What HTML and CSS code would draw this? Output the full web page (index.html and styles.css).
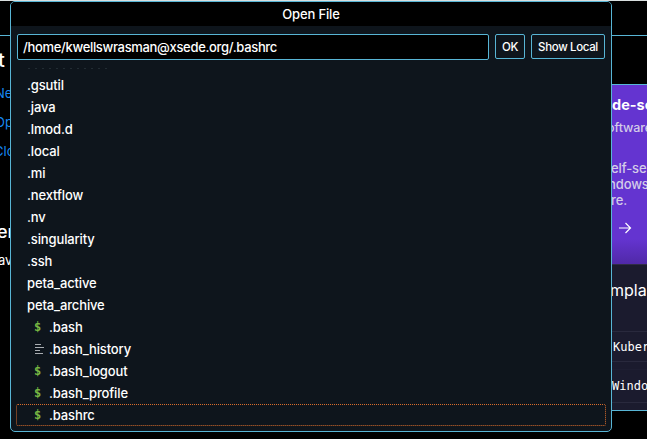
FILE: index.html
```html
<!DOCTYPE html>
<html lang="en">
<head>
<meta charset="utf-8">
<title>Open File</title>
<link rel="stylesheet" href="styles.css">
</head>
<body>
<div class="page">
  <div class="topbar"></div>
  <main class="welcome">
    <section class="start">
      <h1>t</h1>
      <a>Ne</a>
      <a>Op</a>
      <a>Clo</a>
      <h2>er</h2>
      <p>av</p>
    </section>
    <section class="promo">
      <div class="hero">
        <h3>de-se</h3>
        <p class="sub">oftware</p>
        <p class="copy"><span>elf-se</span><br><span class="shift">ndows</span><br><span>re.</span></p>
        <svg class="arrow" width="14" height="12" viewBox="0 0 14 12"><path d="M1 6h11.5M7.5 1l5 5-5 5"/></svg>
      </div>
      <div class="templates">
        <h4>mpla</h4>
        <div class="template">Kuber</div>
        <div class="template second">Windo</div>
      </div>
    </section>
  </main>
</div>
<div class="dialog">
  <header>Open File</header>
  <div class="controls">
    <div class="path"><span>/home/kwellswrasman@xsede.org/.bashrc</span></div>
    <button class="ok">OK</button>
    <button class="local">Show Local</button>
  </div>
  <div class="clipped-row"></div>
  <ul class="files">
    <li><span>.gsutil</span></li>
    <li><span>.java</span></li>
    <li><span>.lmod.d</span></li>
    <li><span>.local</span></li>
    <li><span>.mi</span></li>
    <li><span>.nextflow</span></li>
    <li><span>.nv</span></li>
    <li><span>.singularity</span></li>
    <li><span>.ssh</span></li>
    <li><span>peta_active</span></li>
    <li><span>peta_archive</span></li>
    <li class="file"><i>$</i><span>.bash</span></li>
    <li class="file"><svg width="10" height="10" viewBox="0 0 10 10"><path d="M1 .5h6M1 3.500h9M1 6.500h5M1 9.500h8"/></svg><span>.bash_history</span></li>
    <li class="file"><i>$</i><span>.bash_logout</span></li>
    <li class="file"><i>$</i><span>.bash_profile</span></li>
    <li class="file focused"><i>$</i><span>.bashrc</span></li>
  </ul>
</div>
</body>
</html>
```
FILE: styles.css
```css
* { box-sizing: border-box; }
body {
  margin: 0;
  width: 647px;
  height: 439px;
  overflow: hidden;
  background: #000;
  color: #fff;
  font: 13px/16px Inter, "Liberation Sans", sans-serif;
}
h1, h2, h3, h4, p, ul { margin: 0; padding: 0; }
.page { height: 439px; border-top: 1px solid #d9dfdf; }
.topbar { height: 35px; border-bottom: 1px solid #58b5d5; }
.welcome { display: flex; justify-content: space-between; }
.start { width: 10px; overflow: hidden; white-space: nowrap; }
.start h1 { font: 500 20px/24px Inter, sans-serif; margin: 12px 0 0 -2px; }
.start a { display: block; height: 29px; margin-left: -5px; color: #1688f0; line-height: 16px; }
.start h1 + a { margin-top: 13px; }
.start a:nth-of-type(2) { margin-left: -5px; }
.start a:nth-of-type(3) { margin-left: -6px; }
.start h2 { font: 500 18px/20px Inter, sans-serif; margin: 50px 0 0 -3px; }
.start p { margin: 10px 0 0 -2px; }
.promo {
  width: 36px;
  height: 327px;
  margin-top: 48px;
  border: solid #58b5d5;
  border-width: 1px 0;
  overflow: hidden;
  white-space: nowrap;
}
.hero {
  height: 179px;
  padding-top: 11px;
  background: linear-gradient(#6434d0 86%, #5029a8);
  color: #d3cce8;
}
.hero h3 { color: #fff; font: 700 14.5px/18px Inter, sans-serif; margin-left: 1px; }
.sub { margin: 6px 0 0 -4px; font-size: 12.5px; font-weight: 500; letter-spacing: -0.1px; }
.copy { margin: 24px 0 0; font-size: 13px; font-weight: 500; letter-spacing: -0.1px; }
.shift { margin-left: -3px; }
.arrow { display: block; margin: 14px 0 0 7px; fill: none; stroke: #fff; stroke-width: 1.2; }
.templates { height: 146px; background: #1b1b2e; border-top: 1px solid #302c46; }
.templates h4 { font: 400 16px/20px Inter, sans-serif; margin: 15px 0 0 -1px; }
.template {
  height: 31px;
  margin-top: 31px;
  padding: 7px 0 0 2px;
  border: solid #29293d;
  border-width: 1px 0;
  font: 12px/16px "DejaVu Sans Mono", monospace;
}
.template.second { height: 34px; margin-top: 7px; padding: 8px 0 0 1px; border-top-color: #1e1e32; }
.dialog {
  position: absolute;
  left: 10px;
  top: 1px;
  width: 602px;
  height: 431px;
  background: #0e151c;
  border: 1px solid #58b5d5;
  border-radius: 5px;
  overflow: hidden;
}
.dialog header { height: 24px; padding-top: 4px; background: #000; text-align: center; font-weight: 500; letter-spacing: -0.15px; }
.controls { display: flex; align-items: flex-start; gap: 6px; margin-top: 8px; padding: 0 6px; }
.path {
  width: 472px;
  height: 26px;
  padding: 4px 5px;
  border: 1px solid #58b5d5;
  border-radius: 2px;
  background: #000;
  font-weight: 500;
  letter-spacing: -0.33px;
}
button {
  height: 25px;
  padding: 0;
  border: 1px solid #58b5d5;
  border-radius: 2px;
  background: transparent;
  color: #fff;
  font: 500 11.5px/16px Inter, sans-serif;
  letter-spacing: -0.35px;
}
.ok { width: 30px; }
.local { width: 74px; letter-spacing: -0.35px; }
.clipped-row {
  width: 84px;
  height: 1px;
  margin: 8px 0 0 17px;
  background: repeating-linear-gradient(90deg, #222c33 0 2px, transparent 2px 7px);
}
.files { list-style: none; margin: 5px 5px 0; font-weight: 500; letter-spacing: -0.13px; }
.files li { display: flex; align-items: center; height: 22px; padding-left: 11px; }
.files .file { padding-left: 18px; }
.files i { width: 15px; color: #79b843; font: 700 12px/16px "DejaVu Sans Mono", monospace; }
.files svg { margin-right: 5px; fill: none; stroke: #a9adb1; stroke-width: 1; }
.files .focused { padding-left: 17px; border: 1px dotted #d96d2c; border-radius: 2px; }
```
